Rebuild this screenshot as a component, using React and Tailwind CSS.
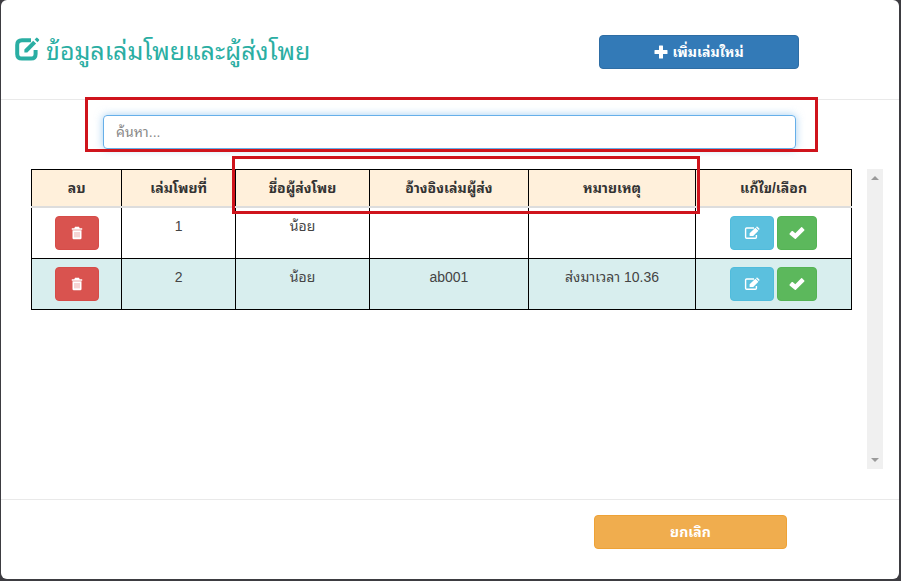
import React, { useState } from 'react';

const books = [
  { no: 1, sender: 'น้อย', ref: '', note: '' },
  { no: 2, sender: 'น้อย', ref: 'ab001', note: 'ส่งมาเวลา 10.36' },
];

const TitleIcon = () => (
  <svg viewBox="0 0 26 24" className="w-[26px] h-6 shrink-0" fill="none" stroke="currentColor" strokeWidth="4" aria-hidden="true">
    <path d="M17 3.2H8Q3.2 3.2 3.2 8v9q0 4.6 4.8 4.6h9q4.6 0 4.6-4.6v-4" />
    <path d="M10.4 15.6v-3.1l8.8-8.8 2.9 2.9-8.8 8.8z" fill="currentColor" stroke="none" />
    <path d="m20.6 2.4 1.5-1.5q.7-.7 1.4 0l1.4 1.4q.7.7 0 1.4l-1.5 1.5z" fill="currentColor" stroke="none" />
  </svg>
);

const EditIcon = () => (
  <svg viewBox="0 0 16 14" className="w-4 h-3.5" fill="none" aria-hidden="true">
    <path d="M10 2H2.6Q1.6 2 1.6 3v8.2q0 1 1 1h8.8q1 0 1-1V9" stroke="currentColor" strokeWidth="1.4" />
    <path d="m11.4 1.8 3 3-5.2 5.2H5.6V7.2zM12 1.2l.5-.4q.5-.4 1 0l1.8 1.7q.4.5 0 1l-.5.6z" fill="currentColor" />
  </svg>
);

const TrashIcon = () => (
  <svg viewBox="0 0 14 14" className="w-3.5 h-3.5" aria-hidden="true">
    <path d="M5 .8h4l.7 1.4h2.5v1.6H1.8V2.2h2.5z" fill="currentColor" />
    <path d="M2.5 4.2h9V12q0 1.2-1.2 1.2H3.7Q2.5 13.2 2.5 12z" fill="currentColor" />
    <path d="M5 6v5.4M7 6v5.4M9 6v5.4" stroke="#d9534f" strokeWidth=".5" />
  </svg>
);

const CheckIcon = () => (
  <svg viewBox="0 0 16 14" className="w-4 h-3.5" fill="currentColor" aria-hidden="true">
    <path d="M.6 7.6 2.8 5.1q.4-.4.9 0l2.6 2.2 5.9-6q.4-.4.9 0l2.2 2.2q.4.4 0 .9l-8.4 8.3q-.6.5-1.1 0L.6 8.5q-.4-.4 0-.9z" />
  </svg>
);

const PlusIcon = () => (
  <svg viewBox="0 0 14 14" className="w-3.5 h-3.5" fill="currentColor" aria-hidden="true">
    <path d="M5.5.5h3q.5 0 .5.5v4h4q.5 0 .5.5v3q0 .5-.5.5H9v4q0 .5-.5.5h-3q-.5 0-.5-.5V9H1q-.5 0-.5-.5v-3q0-.5.5-.5h4V1q0-.5.5-.5z" />
  </svg>
);

const App = () => {
  const [search, setSearch] = useState('');
  const rows = books.filter(b => `${b.no} ${b.sender} ${b.ref} ${b.note}`.includes(search));

  return (
    <div className="min-h-screen bg-[#3d3c41] px-px pb-0.5 flex font-['Liberation_Sans','Noto_Sans_Thai_Looped','Loma','Waree','Garuda','Noto_Sans_Thai',sans-serif] text-sm text-[#444]">
      <div className="flex-1 mr-px bg-white rounded-md flex flex-col">
        {/* Header */}
        <header className="h-25 pl-[13px] pr-25 flex items-center justify-between border-b border-[#e9e9e9]">
          <h1 className="flex items-center gap-1.5 text-[25px] text-[#2aaea3]">
            <TitleIcon />
            <span className="pt-1">ข้อมูลเล่มโพยและผู้ส่งโพย</span>
          </h1>
          <button type="button" className="w-50 h-8.5 mt-1 rounded bg-[#337ab7] border border-[#2e6da4] text-white font-bold flex items-center justify-center gap-1">
            <PlusIcon />
            เพิ่มเล่มใหม่
          </button>
        </header>

        <main className="pt-[15px] pl-[30px] pr-4 pb-[30px]">
          {/* Search */}
          <div className="relative ml-[72px] mr-[87px]">
            <input
              type="text"
              aria-label="ค้นหา"
              placeholder="ค้นหา..."
              value={search}
              onChange={e => setSearch(e.target.value)}
              className="block w-full h-8.5 px-3 rounded border border-[#66afe9] shadow-[0_0_8px_rgba(102,175,233,0.6)] outline-none placeholder:text-[#888]"
            />
            <div className="absolute -top-[18px] -bottom-[3px] -left-[18px] -right-[22px] border-3 border-[#cf141c] pointer-events-none" />
          </div>

          <div className="mt-5 min-h-[300px] flex gap-[15px]">
            <div className="relative flex-1">
              <table className="w-full table-fixed border-collapse text-center">
                <colgroup>
                  <col className="w-[11%]" />
                  <col className="w-[13.9%]" />
                  <col className="w-[16.3%]" />
                  <col className="w-[19.4%]" />
                  <col className="w-[20.4%]" />
                  <col className="w-[19%]" />
                </colgroup>
                <thead>
                  <tr className="h-[37px] bg-[#fff0db] text-[#333]">
                    {['ลบ', 'เล่มโพยที่', 'ชื่อผู้ส่งโพย', 'อ้างอิงเล่มผู้ส่ง', 'หมายเหตุ', 'แก้ไข/เลือก'].map(h => (
                      <th key={h} className="border border-black border-b-2 border-b-[#ddd] font-bold">{h}</th>
                    ))}
                  </tr>
                </thead>
                <tbody>
                  {rows.map(b => (
                    <tr key={b.no} className="align-top even:bg-[#d8eeee]">
                      <td className="border border-black p-2">
                        <button type="button" aria-label="ลบ" className="w-11 h-8.5 rounded bg-[#d9534f] border border-[#d64c48] text-white inline-flex items-center justify-center align-top">
                          <TrashIcon />
                        </button>
                      </td>
                      <td className="border border-black p-2">{b.no}</td>
                      <td className="border border-black p-2">{b.sender}</td>
                      <td className="border border-black p-2">{b.ref}</td>
                      <td className="border border-black p-2">{b.note}</td>
                      <td className="border border-black p-2">
                        <div className="flex justify-center gap-[3px]">
                          <button type="button" aria-label="แก้ไข" className="w-11 h-8.5 rounded bg-[#5bc0de] border border-[#50bcdc] text-white flex items-center justify-center">
                            <EditIcon />
                          </button>
                          <button type="button" aria-label="เลือก" className="w-10 h-8.5 rounded bg-[#5cb85c] border border-[#54b354] text-white flex items-center justify-center">
                            <CheckIcon />
                          </button>
                        </div>
                      </td>
                    </tr>
                  ))}
                </tbody>
              </table>
              <div className="absolute -top-[13px] left-[24.5%] w-[57%] h-[58px] border-3 border-[#cf141c] pointer-events-none" />
            </div>

            {/* Scroll track */}
            <div className="w-4 bg-[#f0f0f0] flex flex-col items-center justify-between py-1.5 text-[#9a9a9a]">
              <svg viewBox="0 0 8 6" className="w-2 h-1.5" fill="currentColor" aria-hidden="true"><path d="M0 5l4-4 4 4z" /></svg>
              <svg viewBox="0 0 8 6" className="w-2 h-1.5" fill="currentColor" aria-hidden="true"><path d="M0 1l4 4 4-4z" /></svg>
            </div>
          </div>
        </main>

        <footer className="flex-1 pt-[15px] pr-28 flex items-start justify-end border-t border-[#e9e9e9]">
          <button type="button" className="w-[193px] h-8.5 rounded bg-[#f0ad4e] border border-[#eea236] text-white font-bold">ยกเลิก</button>
        </footer>
      </div>
    </div>
  );
};

export default App;
